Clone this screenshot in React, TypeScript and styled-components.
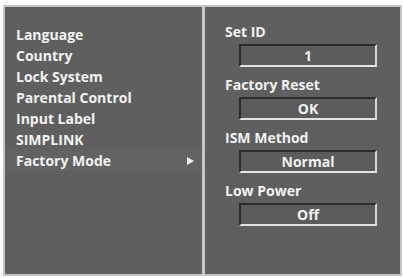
import styled, {createGlobalStyle} from 'styled-components';

const GlobalStyle = createGlobalStyle`
  html, body {
    margin: 0;
    padding: 0;
    background: #ffffff;
  }
  body {
    font-family: "Open Sans", "DejaVu Sans", sans-serif;
  }
`;

const Frame = styled.div`
  display: flex;
  gap: 3px;
  width: 395px;
  height: 267px;
  margin: 5px 0 0 3px;
  padding: 2px;
  background: #c6c6c6;
`;

const Panel = styled.div<{$width: number}>`
  width: ${p => p.$width}px;
  height: 100%;
  box-sizing: border-box;
  background: #5f5f5f;
  color: #f2f2f2;
  font-weight: 700;
  font-size: 14px;
`;

const MenuList = styled.div`
  display: flex;
  flex-direction: column;
  padding-top: 17px;
`;

const MenuItem = styled.div<{$active?: boolean}>`
  display: flex;
  align-items: center;
  justify-content: space-between;
  height: 21px;
  padding: 0 8px 0 11px;
  background: ${p => (p.$active ? '#636363' : 'transparent')};
`;

const Arrow = styled.span`
  width: 0;
  height: 0;
  border-top: 4px solid transparent;
  border-bottom: 4px solid transparent;
  border-left: 7px solid #f2f2f2;
`;

const Settings = styled.div`
  display: flex;
  flex-direction: column;
  gap: 8px;
  padding: 15px 0 0 20px;
`;

const Group = styled.div`
  display: flex;
  flex-direction: column;
  gap: 2px;
`;

const Label = styled.div`
  height: 20px;
  line-height: 20px;
`;

const ValueBox = styled.div`
  width: 138px;
  height: 23px;
  box-sizing: border-box;
  margin-left: 14px;
  display: flex;
  align-items: center;
  justify-content: center;
  border-top: 2px solid #2c2c2c;
  border-left: 2px solid #2c2c2c;
  border-bottom: 2px solid #e4e4e4;
  border-right: 2px solid #d8d8d8;
  background: #5c5c5c;
`;

const menu = ['Language', 'Country', 'Lock System', 'Parental Control', 'Input Label', 'SIMPLINK', 'Factory Mode'];

const settings = [
  {label: 'Set ID', value: '1'},
  {label: 'Factory Reset', value: 'OK'},
  {label: 'ISM Method', value: 'Normal'},
  {label: 'Low Power', value: 'Off'},
];

export default function App() {
  return (
    <>
      <GlobalStyle />
      <Frame>
        <Panel $width={197}>
          <MenuList>
            {menu.map(m => (
              <MenuItem key={m} $active={m === 'Factory Mode'}>
                <span>{m}</span>
                {m === 'Factory Mode' && <Arrow />}
              </MenuItem>
            ))}
          </MenuList>
        </Panel>
        <Panel $width={195}>
          <Settings>
            {settings.map(s => (
              <Group key={s.label}>
                <Label>{s.label}</Label>
                <ValueBox>{s.value}</ValueBox>
              </Group>
            ))}
          </Settings>
        </Panel>
      </Frame>
    </>
  );
}
